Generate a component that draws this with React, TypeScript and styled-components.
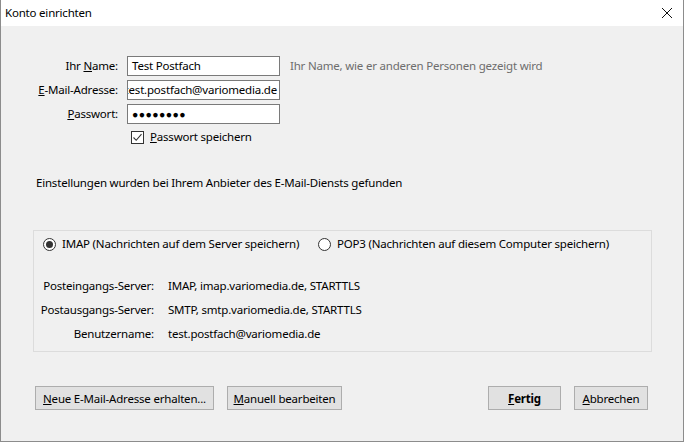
import React from "react";
import styled, { createGlobalStyle } from "styled-components";

const GlobalStyle = createGlobalStyle`
  html, body {
    margin: 0;
    padding: 0;
    background: #f0f0f0;
  }
  body {
    font-family: "Noto Sans", "Liberation Sans", sans-serif;
    font-size: 11.5px;
    letter-spacing: -0.2px;
    line-height: 16px;
    color: #000;
  }
`;

const Window = styled.div`
  width: 684px;
  height: 442px;
  box-sizing: border-box;
  border: 1px solid #8c8c8c;
  border-top: none;
  background: #f0f0f0;
  display: flex;
  flex-direction: column;
`;

const TitleBar = styled.div`
  height: 26px;
  background: #fff;
  display: flex;
  align-items: center;
  justify-content: space-between;
  padding: 0 10px 0 4px;
  flex-shrink: 0;
`;

const Title = styled.span`
  font-size: 11.5px;
`;

const Body = styled.div`
  flex: 1;
  display: flex;
  flex-direction: column;
  padding: 30px 35px 0 32px;
`;

const Form = styled.div`
  display: grid;
  grid-template-columns: 85px 153px auto;
  column-gap: 9px;
  row-gap: 4px;
  align-items: center;
`;

const Label = styled.label`
  justify-self: end;
  white-space: nowrap;
`;

const Input = styled.div<{ $alignEnd?: boolean }>`
  height: 20px;
  box-sizing: border-box;
  border: 1px solid #7a7a7a;
  background: #fff;
  padding: 0 ${p => (p.$alignEnd ? "2px" : "4px")};
  display: flex;
  align-items: center;
  justify-content: ${p => (p.$alignEnd ? "flex-end" : "flex-start")};
  overflow: hidden;
  white-space: nowrap;
`;

const NoShrink = styled.span`
  flex-shrink: 0;
`;

const Dots = styled.span`
  font-size: 10.5px;
  letter-spacing: 0.4px;
`;

const Hint = styled.span`
  color: #6d6d6d;
  padding-left: 1px;
  white-space: nowrap;
`;

const CheckRow = styled.div`
  display: flex;
  align-items: center;
  gap: 6px;
  margin: 5px 0 0 98px;
`;

const Box = styled.span`
  width: 13px;
  height: 13px;
  box-sizing: border-box;
  border: 1px solid #333;
  background: #fff;
  display: inline-flex;
  align-items: center;
  justify-content: center;
`;

const Notice = styled.div`
  margin-top: 30px;
  padding-left: 3px;
`;

const Group = styled.div`
  margin-top: 39px;
  width: 619px;
  height: 122px;
  box-sizing: border-box;
  border: 1px solid #dcdcdc;
  padding: 5px 0 0 9px;
`;

const RadioRow = styled.div`
  display: flex;
  align-items: center;
  height: 16px;
  white-space: nowrap;
`;

const RadioItem = styled.span<{ $width?: number }>`
  display: inline-flex;
  align-items: center;
  gap: 6px;
  width: ${p => (p.$width ? `${p.$width}px` : "auto")};
`;

const Radio = styled.span<{ $checked?: boolean }>`
  width: 13px;
  height: 13px;
  box-sizing: border-box;
  border-radius: 50%;
  border: 1px solid #333;
  background: #fff;
  display: inline-flex;
  align-items: center;
  justify-content: center;
  flex-shrink: 0;
  &::after {
    content: "";
    width: 7px;
    height: 7px;
    border-radius: 50%;
    background: #333;
    display: ${p => (p.$checked ? "block" : "none")};
  }
`;

const Info = styled.div`
  display: grid;
  grid-template-columns: 111px auto;
  column-gap: 14px;
  row-gap: 8px;
  margin-top: 26px;
`;

const InfoKey = styled.span`
  justify-self: end;
  white-space: nowrap;
`;

const Footer = styled.div`
  margin-top: 34px;
  display: flex;
  justify-content: space-between;
  padding-left: 2px;
`;

const ButtonGroup = styled.div`
  display: flex;
  gap: 13px;
`;

const Button = styled.button<{ $width: number; $bold?: boolean }>`
  width: ${p => p.$width}px;
  height: 24px;
  box-sizing: border-box;
  border: 1px solid #adadad;
  background: #e1e1e1;
  font-family: inherit;
  font-size: 11.5px;
  letter-spacing: -0.2px;
  font-weight: ${p => (p.$bold ? 700 : 400)};
  color: #000;
  padding: 0;
`;

const U = styled.span`
  text-decoration: underline;
`;

const CloseIcon = () => (
  <svg width="12" height="12" viewBox="0 0 12 12">
    <path d="M1 1 L11 11 M11 1 L1 11" stroke="#111" strokeWidth="1" fill="none" />
  </svg>
);

const rows = [
  { key: "Posteingangs-Server:", value: "IMAP, imap.variomedia.de, STARTTLS" },
  { key: "Postausgangs-Server:", value: "SMTP, smtp.variomedia.de, STARTTLS" },
  { key: "Benutzername:", value: "test.postfach@variomedia.de" },
];

export default function App() {
  return (
    <>
      <GlobalStyle />
      <Window>
        <TitleBar>
          <Title>Konto einrichten</Title>
          <CloseIcon />
        </TitleBar>
        <Body>
          <Form>
            <Label>
              Ihr <U>N</U>ame:
            </Label>
            <Input>Test Postfach</Input>
            <Hint>Ihr Name, wie er anderen Personen gezeigt wird</Hint>

            <Label>
              <U>E</U>-Mail-Adresse:
            </Label>
            <Input $alignEnd>
              <NoShrink>test.postfach@variomedia.de</NoShrink>
            </Input>
            <span />

            <Label>
              <U>P</U>asswort:
            </Label>
            <Input>
              <Dots>●●●●●●●●</Dots>
            </Input>
            <span />
          </Form>

          <CheckRow>
            <Box>
              <svg width="11" height="11" viewBox="0 0 11 11">
                <path d="M1.5 5.5 L4.2 8.3 L9.5 2.2" stroke="#333" strokeWidth="1.1" fill="none" />
              </svg>
            </Box>
            <span>
              <U>P</U>asswort speichern
            </span>
          </CheckRow>

          <Notice>Einstellungen wurden bei Ihrem Anbieter des E-Mail-Diensts gefunden</Notice>

          <Group>
            <RadioRow>
              <RadioItem $width={275}>
                <Radio $checked />
                IMAP (Nachrichten auf dem Server speichern)
              </RadioItem>
              <RadioItem>
                <Radio />
                POP3 (Nachrichten auf diesem Computer speichern)
              </RadioItem>
            </RadioRow>
            <Info>
              {rows.map(r => (
                <React.Fragment key={r.key}>
                  <InfoKey>{r.key}</InfoKey>
                  <span>{r.value}</span>
                </React.Fragment>
              ))}
            </Info>
          </Group>

          <Footer>
            <ButtonGroup>
              <Button $width={179}>
                <U>N</U>eue E-Mail-Adresse erhalten...
              </Button>
              <Button $width={115}>
                <U>M</U>anuell bearbeiten
              </Button>
            </ButtonGroup>
            <ButtonGroup>
              <Button $width={73} $bold>
                <U>F</U>ertig
              </Button>
              <Button $width={74}>
                <U>A</U>bbrechen
              </Button>
            </ButtonGroup>
          </Footer>
        </Body>
      </Window>
    </>
  );
}
